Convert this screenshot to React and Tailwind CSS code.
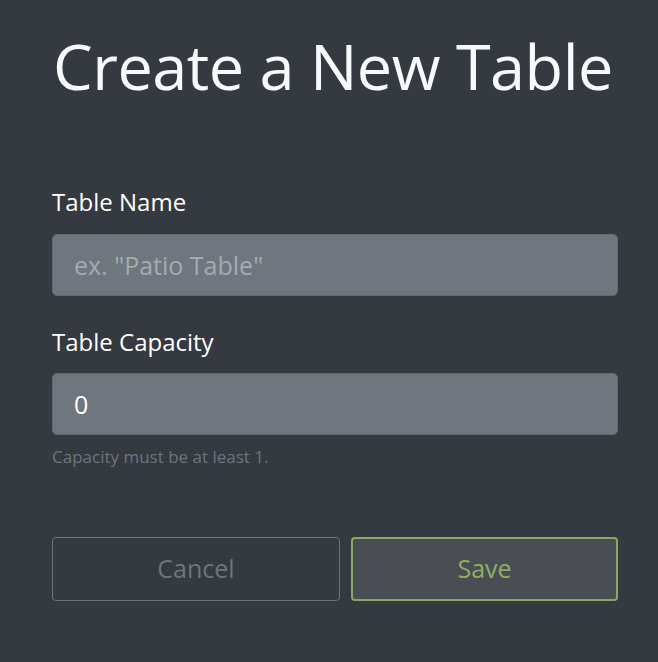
import React from 'react';

export default function App() {
  return (
    <main className="w-full min-h-[662px] bg-[#343a40] pl-[52px] pr-[40px] pt-[26px] font-['Open_Sans',sans-serif]">
      <h1 className="text-[63px] leading-[80px] text-[#f8f9fa] pl-[1px] tracking-[-0.5px]">Create a New Table</h1>

      <form className="mt-[80px]" onSubmit={(e) => e.preventDefault()}>
        <label className="block text-[24px] leading-[32px] font-medium text-white">Table Name</label>
        <input
          type="text"
          placeholder='ex. "Patio Table"'
          className="mt-[16px] w-full h-[62px] rounded-[5px] border border-[#626970] bg-[#6f767e] px-[21px] text-[25px] text-white placeholder:text-[#a5aaaf] outline-none"
        />

        <label className="block mt-[30px] text-[24px] leading-[32px] font-medium text-white">Table Capacity</label>
        <input
          type="text"
          defaultValue="0"
          className="mt-[15px] w-full h-[62px] rounded-[5px] border border-[#626970] bg-[#6f767e] px-[21px] text-[25px] text-white outline-none"
        />
        <p className="mt-[11px] text-[17px] leading-[22px] text-[#6c757d]">Capacity must be at least 1.</p>

        <div className="mt-[69px] flex gap-[11px]">
          <button type="button" className="w-[288px] h-[64px] rounded-[4px] border border-[#6c757d] bg-transparent text-[25px] text-[#6c757d]">
            Cancel
          </button>
          <button type="submit" className="flex-1 h-[64px] rounded-[4px] border-2 border-[#8aa860] bg-[#4a4e54] text-[25px] text-[#8eaf62]">
            Save
          </button>
        </div>
      </form>
    </main>
  );
}
